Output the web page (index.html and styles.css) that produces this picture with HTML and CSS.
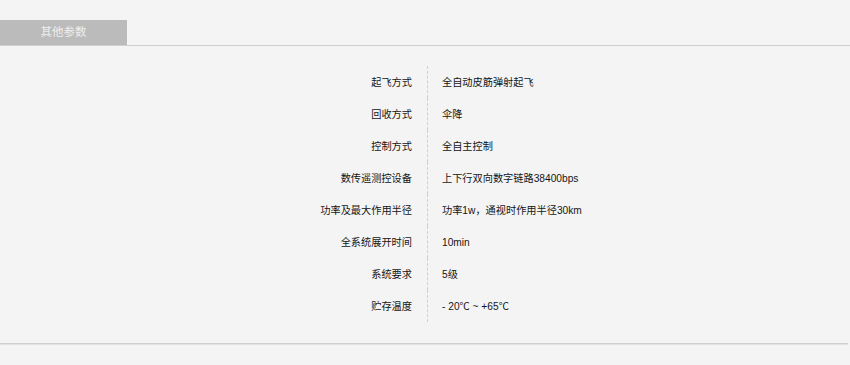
FILE: index.html
```html
<!DOCTYPE html>
<html lang="zh-CN">
<head>
<meta charset="utf-8">
<title>其他参数</title>
<link rel="stylesheet" href="styles.css">
</head>
<body>
<section class="params">
  <div class="tab-bar">
    <span class="tab">其他参数</span>
  </div>
  <dl class="spec">
    <dt>起飞方式</dt><dd>全自动皮筋弹射起飞</dd>
    <dt>回收方式</dt><dd>伞降</dd>
    <dt>控制方式</dt><dd>全自主控制</dd>
    <dt>数传遥测控设备</dt><dd>上下行双向数字链路38400bps</dd>
    <dt>功率及最大作用半径</dt><dd>功率1w，通视时作用半径30km</dd>
    <dt>全系统展开时间</dt><dd>10min</dd>
    <dt>系统要求</dt><dd>5级</dd>
    <dt>贮存温度</dt><dd>- 20℃ ~ +65℃</dd>
  </dl>
  <div class="foot-rule"></div>
</section>
</body>
</html>
```

FILE: styles.css
```css
html, body {
  margin: 0;
  padding: 0;
  background: #f4f4f4;
}

body {
  font-family: "Liberation Sans", "Noto Sans CJK SC", sans-serif;
  color: #141414;
  width: 850px;
  height: 365px;
  overflow: hidden;
}

.params {
  padding-top: 20px;
}

.tab-bar {
  display: flex;
  border-bottom: 1px solid #cfcfcf;
}

.tab {
  width: 127px;
  height: 25px;
  line-height: 25px;
  background: #bbbbbb;
  color: #efefef;
  font-size: 11.5px;
  text-align: center;
}

.spec {
  display: grid;
  grid-template-columns: 428px 1fr;
  margin: 20px 0 0;
  font-size: 10.2px;
}

.spec dt,
.spec dd {
  margin: 0;
  box-sizing: border-box;
  height: 32px;
  padding-top: 1px;
  line-height: 32px;
  white-space: nowrap;
  overflow: hidden;
}

.spec dt {
  text-align: right;
  padding-right: 15px;
  border-right: 1px dashed #cfcfcf;
}

.spec dd {
  padding-left: 14px;
}

.foot-rule {
  margin: 21px 2px 0 0;
  border-top: 1px solid #cfcfcf;
  border-bottom: 1px solid #e2e2e2;
}
```
